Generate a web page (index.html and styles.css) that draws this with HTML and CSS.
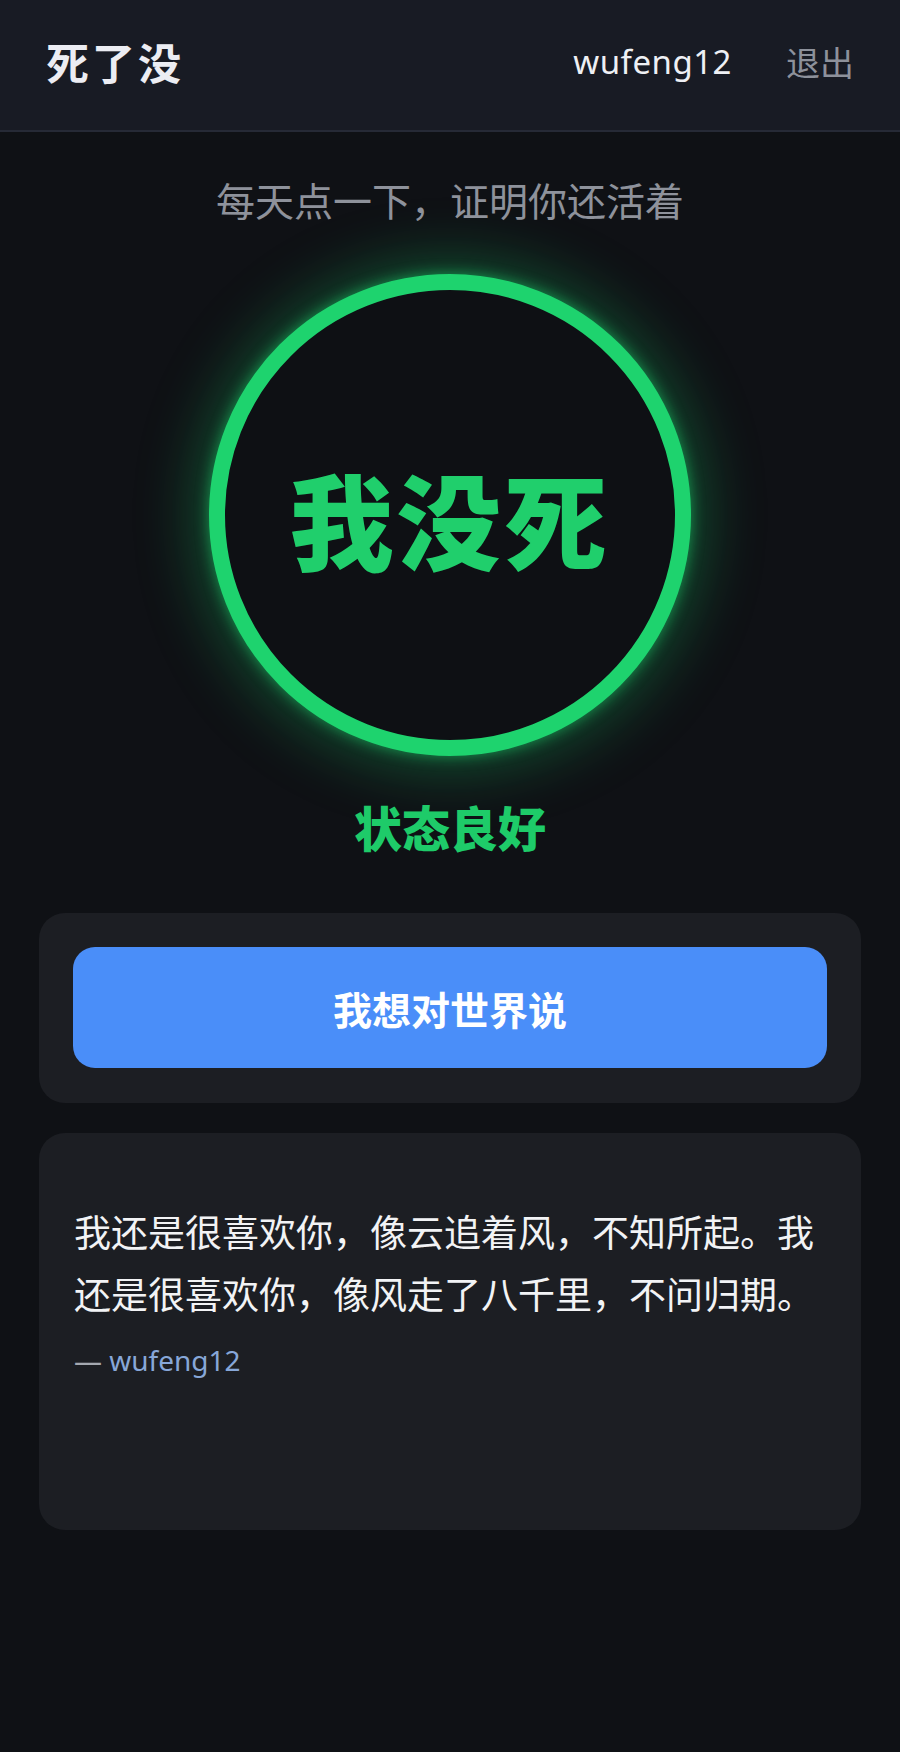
FILE: index.html
```html
<!DOCTYPE html>
<html lang="zh-CN">
<head>
    <meta charset="UTF-8">
    <title>死了没</title>
    <meta name="viewport" content="width=device-width, initial-scale=1">
    <link rel="stylesheet" href="styles.css">
</head>
<body>
<div class="header">
    <h1 class="logo">死了没</h1>
    <div class="user-box">
        <span class="username">wufeng12</span>
        <a class="logout" href="#">退出</a>
    </div>
</div>
<div class="main">
    <p class="tip">每天点一下，证明你还活着</p>
    <div class="check-btn">
        <span>我没死</span>
    </div>
    <h3 class="status">状态良好</h3>
    <div class="card action-card">
        <button class="say-btn">我想对世界说</button>
    </div>
    <div class="card quote-card">
        <p class="quote-text">我还是很喜欢你，像云追着风，不知所起。我还是很喜欢你，像风走了八千里，不问归期。</p>
        <p class="quote-author"><span class="dash">—</span> <span class="author-name">wufeng12</span></p>
    </div>
</div>
</body>
</html>
```

FILE: styles.css
```css
/*reset*/
body,h1,h3,p,button{
    padding: 0;
    margin: 0;
}
/*public*/
body{
    font-family: "Noto Sans","Noto Sans CJK SC",sans-serif;
    background: #0f1115;
    color: #f0f1f3;
}
a{
    text-decoration: none;
}
.header{
    height: 132px;
    padding: 0 46px 8px;
    box-sizing: border-box;
    display: flex;
    justify-content: space-between;
    align-items: center;
    background: #181b24;
    border-bottom: 2px solid #262a36;
}
.logo{
    font-size: 43px;
    font-weight: 700;
    letter-spacing: 3px;
    color: #ecedf3;
}
.user-box{
    display: flex;
    align-items: center;
    gap: 54px;
}
.username{
    font-size: 33px;
    letter-spacing: 0.5px;
    color: #eef0f4;
}
.logout{
    font-size: 34px;
    color: #8d919b;
}
.main{
    text-align: center;
    padding-bottom: 220px;
}
.tip{
    margin-top: 42px;
    font-size: 39px;
    line-height: 54px;
    color: #8e929b;
}
.check-btn{
    width: 482px;
    height: 482px;
    margin: 46px auto 0;
    box-sizing: border-box;
    border: 16px solid #1ed36e;
    border-radius: 50%;
    background: #0e1014;
    box-shadow: 0 0 60px 12px rgba(24, 190, 96, 0.38), 0 0 14px rgba(30, 210, 110, 0.6);
    display: flex;
    align-items: center;
    justify-content: center;
    cursor: pointer;
}
.check-btn span{
    font-size: 104px;
    font-weight: 900;
    color: #20cf6c;
    letter-spacing: 3px;
    margin-top: 4px;
}
.status{
    margin-top: 43px;
    font-size: 48px;
    line-height: 60px;
    font-weight: 900;
    color: #1ecb69;
}
.card{
    margin: 0 39px;
    background: #1c1e23;
    border-radius: 26px;
    text-align: left;
}
.action-card{
    margin-top: 54px;
    padding: 34px 34px 35px;
}
.say-btn{
    width: 100%;
    height: 121px;
    border: none;
    border-radius: 22px;
    background: #4a8ef9;
    color: #ffffff;
    font-family: inherit;
    font-size: 39px;
    font-weight: 700;
    cursor: pointer;
}
.quote-card{
    margin-top: 30px;
    height: 397px;
    box-sizing: border-box;
    padding: 69px 35px 35px;
}
.quote-text{
    font-size: 37px;
    line-height: 62px;
    color: #f2f3f5;
}
.quote-author{
    margin-top: 14px;
    font-size: 28px;
    line-height: 40px;
}
.dash{
    color: #a4a8b0;
}
.author-name{
    color: #87a7d8;
}
```
